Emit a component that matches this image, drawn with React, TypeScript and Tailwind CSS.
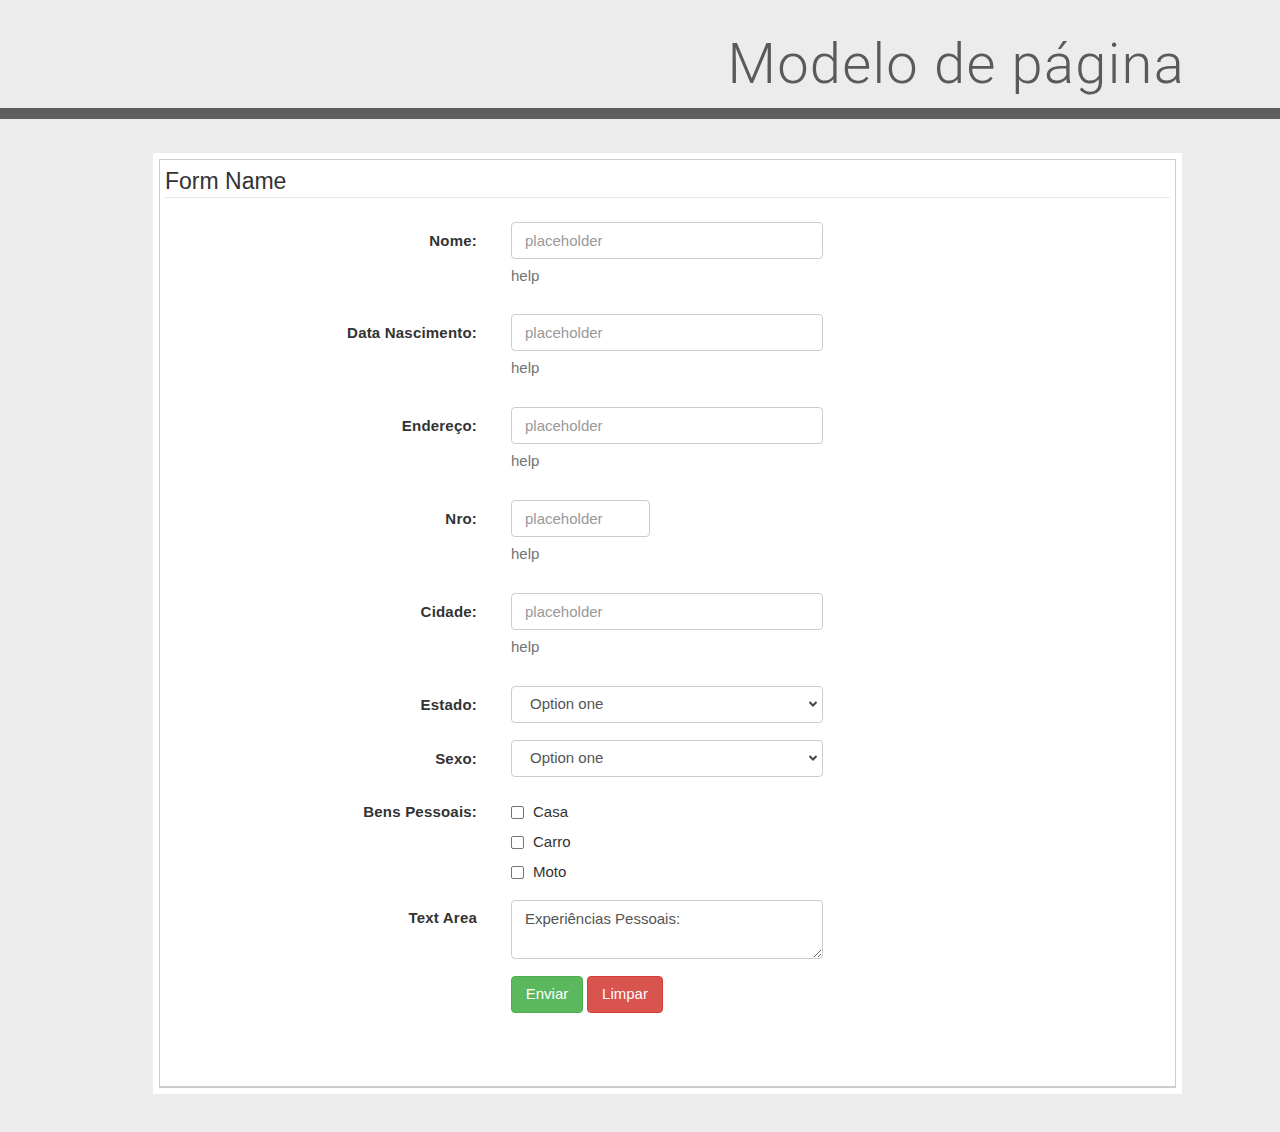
import type { ReactNode } from 'react';

const sans = "font-['Liberation_Sans',Arial,sans-serif]";

function Row({ label, children, labelPad = 'pt-[9px]' }: { label: string; children: ReactNode; labelPad?: string }) {
  return (
    <div className="flex">
      <div className={`w-[312px] shrink-0 text-right text-[15px] font-bold leading-5 tracking-[0.2px] text-[#333] ${labelPad}`}>{label}</div>
      <div className="ml-[34px] flex flex-col">{children}</div>
    </div>
  );
}

function TextInput({ wide = true }: { wide?: boolean }) {
  return (
    <input
      type="text"
      placeholder="placeholder"
      className={`${wide ? 'w-[312px]' : 'w-[139px]'} h-[37px] rounded-[4px] border border-[#ccc] bg-white px-[13px] text-[15px] text-[#555] outline-none placeholder:text-[#999]`}
    />
  );
}

function Help() {
  return <span className="mt-[7px] h-5 text-[15px] leading-5 text-[#737373]">help</span>;
}

function Select() {
  return (
    <div className="relative h-[37px] w-[312px]">
      <select className="h-full w-full appearance-none rounded-[4px] border border-[#ccc] bg-white pl-[18px] text-[15px] text-[#555] outline-none">
        <option>Option one</option>
        <option>Option two</option>
      </select>
      <svg className="pointer-events-none absolute right-[5px] top-[14px]" width="10" height="8" viewBox="0 0 10 8">
        <path d="M1.5 2 L5 5.5 L8.5 2" fill="none" stroke="#444" strokeWidth="2" />
      </svg>
    </div>
  );
}

function Check({ label }: { label: string }) {
  return (
    <label className="flex h-[30px] items-center">
      <span className="h-[13px] w-[13px] rounded-[2px] border border-[#767676] bg-white" />
      <span className="ml-[9px] text-[15px] text-[#333]">{label}</span>
    </label>
  );
}

export default function App() {
  return (
    <div className={`min-h-[1132px] bg-[#ececec] ${sans}`}>
      <header className="h-[108px] pr-[95px] pt-[32px] text-right">
        <h1 className="font-['Roboto',sans-serif] text-[56px] font-light leading-[64px] tracking-[1.3px] text-[#5a5a5a]">Modelo de página</h1>
      </header>
      <div className="h-[11px] bg-[#5e5e5e]" />

      <div className="ml-[153px] mt-[34px] w-[1029px] bg-white p-[6px]">
        <form className="h-[929px] border border-b-2 border-[#ccc] px-[5px] pt-[6px]">
          <div className="h-[32px] border-b border-[#e5e5e5] text-[23px] leading-[31px] text-[#333]">Form Name</div>

          <div className="mt-[24px] flex flex-col">
            {['Nome:', 'Data Nascimento:', 'Endereço:'].map((l, i) => (
              <div key={l} className={i === 0 ? 'mb-[28px]' : 'mb-[29px]'}>
                <Row label={l}>
                  <TextInput />
                  <Help />
                </Row>
              </div>
            ))}
            <div className="mb-[29px]">
              <Row label="Nro:">
                <TextInput wide={false} />
                <Help />
              </Row>
            </div>
            <div className="mb-[29px]">
              <Row label="Cidade:">
                <TextInput />
                <Help />
              </Row>
            </div>
            <div className="mb-[17px]">
              <Row label="Estado:">
                <Select />
              </Row>
            </div>
            <div className="mb-[17px]">
              <Row label="Sexo:">
                <Select />
              </Row>
            </div>
            <div className="mb-[13px]">
              <Row label="Bens Pessoais:" labelPad="pt-[8px]">
                <div className="pt-[3px]">
                  <Check label="Casa" />
                  <Check label="Carro" />
                  <Check label="Moto" />
                </div>
              </Row>
            </div>
            <div className="mb-[17px]">
              <Row label="Text Area" labelPad="pt-[8px]">
                <textarea
                  defaultValue="Experiências Pessoais:"
                  className="block h-[59px] w-[312px] rounded-[4px] border border-[#ccc] px-[13px] py-[8px] text-[15px] leading-5 text-[#555] outline-none"
                />
              </Row>
            </div>
            <Row label="">
              <div className="flex gap-[4px]">
                <button type="button" className="h-[37px] w-[72px] rounded-[4px] border border-[#4cae4c] bg-[#5cb85c] text-[15px] text-white">
                  Enviar
                </button>
                <button type="button" className="h-[37px] w-[76px] rounded-[4px] border border-[#d43f3a] bg-[#d9534f] text-[15px] text-white">
                  Limpar
                </button>
              </div>
            </Row>
          </div>
        </form>
      </div>
    </div>
  );
}
